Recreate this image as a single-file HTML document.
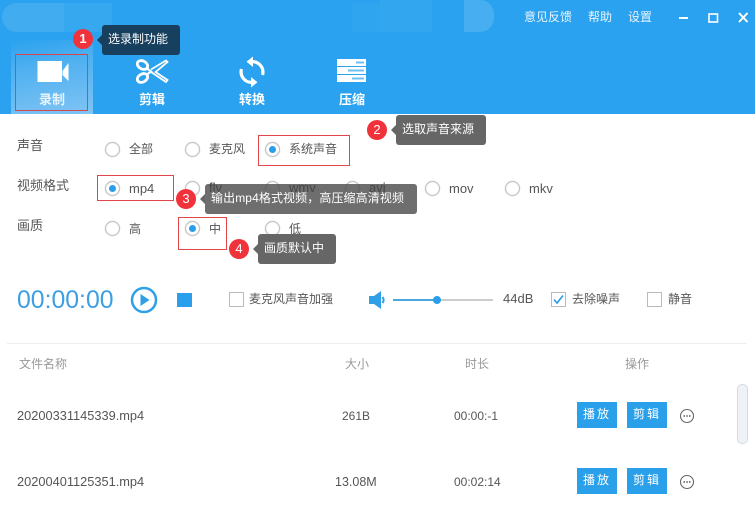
<!DOCTYPE html>
<html><head><meta charset="utf-8"><style>
html,body{margin:0;padding:0;background:#fff}
#p{position:relative;width:755px;height:508px;overflow:hidden;background:#fff;font-family:"Liberation Sans","Noto Sans CJK SC",sans-serif;font-size:12px;color:#555}
#p div{position:absolute;white-space:nowrap}
.t{line-height:16px}
.r{width:13px;height:13px;border:1px solid #c4c4c4;border-radius:50%;box-sizing:content-box;background:#fff;box-shadow:0 0 1px #bbb,inset 0 0 1px #ccc}
.r.on::after{content:"";position:absolute;left:3px;top:3px;width:7px;height:7px;border-radius:50%;background:#2a9eea}
.box{border:1px solid #e2454a;box-sizing:border-box}
.num{width:20px;height:20px;border-radius:50%;background:#f0323a;color:#fff;text-align:center;line-height:20px;font-size:13px}
.tip{height:30px;line-height:29px;background:#666;color:#fff;border-radius:3px;box-sizing:border-box;padding-left:6px;font-size:12px}
.tip::before{content:"";position:absolute;left:-5px;top:10px;border:5px solid transparent;border-left:0;border-right-color:#666}
.tab{color:#fff;font-weight:bold;font-size:13px;width:40px;text-align:center;top:92px;line-height:16px}
.top{color:#e8f5fe;font-size:12px;top:9px;line-height:16px}
.btn{width:40px;height:26px;background:#2aa0ea;color:#fff;text-align:center;line-height:25px;font-size:12px;letter-spacing:2px}
.cb{width:13px;height:13px;border:1px solid #bbb;background:#fff}
.h{color:#999;top:356px;line-height:16px}
</style></head><body><div id="p">
<div style="left:0;top:0;width:755px;height:114px;background:#2aa2ef"></div>
<div style="left:2px;top:3px;width:62px;height:29px;background:#42acf0;border-radius:15px 0 0 15px"></div>
<div style="left:64px;top:3px;width:48px;height:29px;background:#36a8f0"></div>
<div style="left:352px;top:3px;width:28px;height:29px;background:#30a5ef"></div>
<div style="left:380px;top:0;width:52px;height:32px;background:#32a6ef"></div>
<div style="left:464px;top:0;width:30px;height:32px;background:#47aff1;border-radius:0 14px 14px 0"></div>
<div class="top" style="left:524px">意见反馈</div>
<div class="top" style="left:588px">帮助</div>
<div class="top" style="left:628px">设置</div>
<svg style="position:absolute;left:670px;top:8px" width="85" height="20"><path d="M9 10h9" stroke="#fff" stroke-width="2"/><rect x="39" y="6" width="8.500" height="8" fill="none" stroke="#fff" stroke-width="1.600"/><path d="M69 5l8.500 9M77.500 5l-8.500 9" stroke="#fff" stroke-width="2"/></svg>

<div style="left:11px;top:40px;width:82px;height:74px;background:linear-gradient(170deg,#2aa2ef 0%,#4fb0f0 35%,#7fc4f4 100%)"></div>
<div class="box" style="left:15px;top:54px;width:73px;height:57px;border-color:#d4474f"></div>
<svg style="position:absolute;left:36px;top:60px" width="34" height="24"><path d="M1.500 1h24.500v21H1.500zM26.500 11l6-8v18l-6-6z" fill="#fff"/></svg>
<svg style="position:absolute;left:135px;top:58px" width="35" height="28" fill="none" stroke="#fff" stroke-width="2.800"><ellipse cx="7.500" cy="7" rx="5.500" ry="4" transform="rotate(30 7.500 7)"/><ellipse cx="7.500" cy="20" rx="5.500" ry="4" transform="rotate(-30 7.500 20)"/><path d="M12 10.500l4 3-4 3" stroke-width="2.200"/><path d="M16 11.500l15-9 1.500 1.500-12 10 12 8-1.500 2-15-10" stroke-width="1.800"/></svg>
<svg style="position:absolute;left:238px;top:56px" width="30" height="32" fill="none" stroke="#fff" stroke-width="3.200"><path d="M24.500 19A10.500 10.500 0 0 0 15 5.600M3.500 13A10.500 10.500 0 0 0 13 26.400"/><path d="M15 0.500V11L8.500 5.700zM13 21v10.500l6.500-5.300z" fill="#fff" stroke="none"/></svg>
<svg style="position:absolute;left:337px;top:59px" width="30" height="24"><path d="M0 0h29v7H0zM0 8h29v7H0zM0 16h29v7H0z" fill="#fff"/><path d="M19 3.500h8M11 11.500h16M15 19.500h12" stroke="#6fbff3" stroke-width="2"/></svg>
<div class="tab" style="left:32px;color:#e6f4fd">录制</div>
<div class="tab" style="left:132px">剪辑</div>
<div class="tab" style="left:232px">转换</div>
<div class="tab" style="left:332px">压缩</div>

<div class="num" style="left:73px;top:29px;font-weight:bold">1</div>
<div class="tip" style="left:102px;top:25px;width:78px;background:#173f5e;padding-left:6px">选录制功能</div>
<div style="left:97px;top:35px;border:5px solid transparent;border-left:0;border-right-color:#173f5e"></div>

<div class="t" style="left:17px;top:138px;font-size:13px">声音</div>
<div class="t" style="left:17px;top:178px;font-size:13px">视频格式</div>
<div class="t" style="left:17px;top:218px;font-size:13px">画质</div>

<div class="r" style="left:105px;top:142px"></div><div class="t" style="left:129px;top:141px">全部</div>
<div class="r" style="left:185px;top:142px"></div><div class="t" style="left:209px;top:141px">麦克风</div>
<div class="box" style="left:258px;top:135px;width:92px;height:31px"></div>
<div class="r on" style="left:265px;top:142px"></div><div class="t" style="left:289px;top:141px">系统声音</div>

<div class="box" style="left:97px;top:175px;width:77px;height:26px"></div>
<div class="r on" style="left:105px;top:181px"></div><div class="t" style="left:129px;top:181px;font-size:13px">mp4</div>
<div class="r" style="left:185px;top:181px"></div><div class="t" style="left:209px;top:180px;font-size:13px;color:#222">flv</div>
<div class="r" style="left:265px;top:181px"></div><div class="t" style="left:289px;top:180px;font-size:13px;color:#222">wmv</div>
<div class="r" style="left:345px;top:181px"></div><div class="t" style="left:369px;top:180px;font-size:13px;color:#222">avi</div>
<div class="r" style="left:425px;top:181px"></div><div class="t" style="left:449px;top:181px;font-size:13px">mov</div>
<div class="r" style="left:505px;top:181px"></div><div class="t" style="left:529px;top:181px;font-size:13px">mkv</div>

<div class="r" style="left:105px;top:221px"></div><div class="t" style="left:129px;top:221px">高</div>
<div class="box" style="left:178px;top:217px;width:49px;height:33px"></div>
<div class="r on" style="left:185px;top:221px"></div><div class="t" style="left:209px;top:221px">中</div>
<div class="r" style="left:265px;top:221px"></div><div class="t" style="left:289px;top:221px">低</div>

<div class="num" style="left:367px;top:120px">2</div>
<div class="tip" style="left:396px;top:115px;width:90px">选取声音来源</div>
<div class="num" style="left:176px;top:189px">3</div>
<div class="tip" style="left:205px;top:184px;width:212px;letter-spacing:.1px;background:rgba(78,78,78,.82)">输出mp4格式视频，高压缩高清视频</div>
<div class="num" style="left:229px;top:239px">4</div>
<div class="tip" style="left:258px;top:234px;width:78px">画质默认中</div>

<div style="left:17px;top:286px;font-size:24.800px;line-height:30px;color:#3c9fe4">00:00:00</div>
<svg style="position:absolute;left:130px;top:286px" width="28" height="28"><circle cx="14" cy="14" r="12" fill="none" stroke="#2f9fe8" stroke-width="2.500"/><path d="M10.500 8l9 6-9 6z" fill="#2f9fe8"/></svg>
<div style="left:177px;top:293px;width:15px;height:14px;background:#2aa0ec"></div>
<div class="cb" style="left:229px;top:292px"></div>
<div class="t" style="left:249px;top:291px">麦克风声音加强</div>
<svg style="position:absolute;left:368px;top:290px" width="20" height="20"><path d="M1 6h5l7-5v18l-7-5H1z" fill="#2f9fe8"/><path d="M14.500 7c1.500 2 1.500 4 0 6" stroke="#2f9fe8" stroke-width="2" fill="none"/></svg>
<div style="left:393px;top:299px;width:100px;height:2px;background:#ccc"></div>
<div style="left:393px;top:299px;width:44px;height:2px;background:#4aa8e0"></div>
<div style="left:433px;top:296px;width:8px;height:8px;border-radius:50%;background:#2a9eea"></div>
<div class="t" style="left:503px;top:291px;font-size:13px">44dB</div>
<div class="cb" style="left:551px;top:292px"></div>
<svg style="position:absolute;left:551px;top:292px" width="15" height="15"><path d="M3 7.500l3 3.500 6-7.500" stroke="#2a9eea" stroke-width="1.700" fill="none"/></svg>
<div class="t" style="left:572px;top:291px">去除噪声</div>
<div class="cb" style="left:647px;top:292px"></div>
<div class="t" style="left:668px;top:291px">静音</div>

<div style="left:7px;top:343px;width:740px;height:1px;background:#eee"></div>
<div class="h" style="left:19px">文件名称</div>
<div class="h" style="left:345px">大小</div>
<div class="h" style="left:465px">时长</div>
<div class="h" style="left:625px">操作</div>

<div class="t" style="left:17px;top:408px;font-size:12.800px">20200331145339.mp4</div>
<div class="t" style="left:342px;top:408px">261B</div>
<div class="t" style="left:454px;top:408px">00:00:-1</div>
<div class="btn" style="left:577px;top:402px">播放</div>
<div class="btn" style="left:627px;top:402px">剪辑</div>
<svg style="position:absolute;left:679px;top:408px" width="16" height="16"><circle cx="8" cy="8" r="6.500" fill="none" stroke="#666" stroke-width="1.100"/><path d="M4.500 8h1.500M7.300 8h1.500M10 8h1.500" stroke="#555" stroke-width="1.500"/></svg>

<div class="t" style="left:17px;top:474px;font-size:12.800px">20200401125351.mp4</div>
<div class="t" style="left:335px;top:474px;font-size:12.500px">13.08M</div>
<div class="t" style="left:454px;top:474px">00:02:14</div>
<div class="btn" style="left:577px;top:468px">播放</div>
<div class="btn" style="left:627px;top:468px">剪辑</div>
<svg style="position:absolute;left:679px;top:474px" width="16" height="16"><circle cx="8" cy="8" r="6.500" fill="none" stroke="#666" stroke-width="1.100"/><path d="M4.500 8h1.500M7.300 8h1.500M10 8h1.500" stroke="#555" stroke-width="1.500"/></svg>

<div style="left:737px;top:384px;width:9px;height:58px;background:#eef2f7;border:1px solid #d4dae2;border-radius:5px"></div>
</div></body></html>
